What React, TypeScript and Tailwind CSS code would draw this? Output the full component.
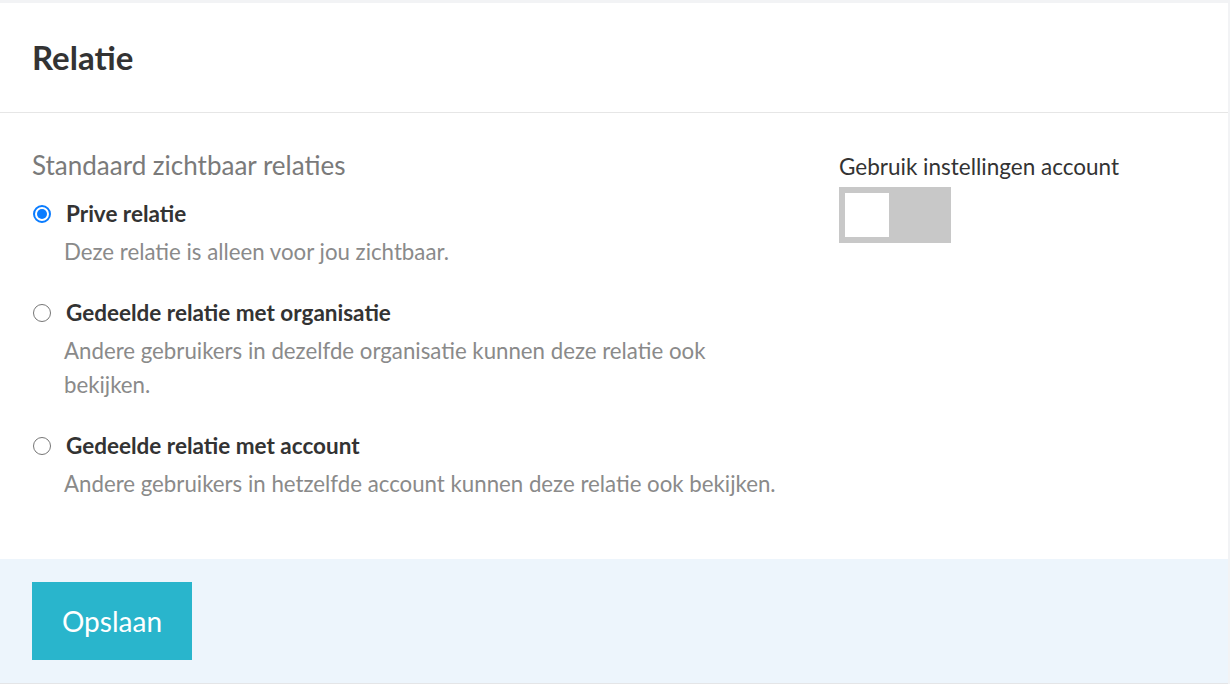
import React from "react";

function Radio({ checked }: { checked: boolean }) {
  return checked ? (
    <span className="flex h-[18px] w-[18px] shrink-0 items-center justify-center rounded-full border-2 border-[#0a7cff] bg-white">
      <span className="h-[10px] w-[10px] rounded-full bg-[#0a7cff]" />
    </span>
  ) : (
    <span className="h-[18px] w-[18px] shrink-0 rounded-full border border-[#767676] bg-white" />
  );
}

function Option({ checked, title, desc }: { checked: boolean; title: string; desc: string }) {
  return (
    <div className="flex flex-col">
      <div className="flex items-center gap-[15px] pl-[1px]">
        <Radio checked={checked} />
        <span className="text-[22.5px] font-bold leading-[28px] text-[#333]">{title}</span>
      </div>
      <p className="mt-[7px] pl-[32px] text-[22.25px] leading-[34px] text-[#8a8a8a]">{desc}</p>
    </div>
  );
}

export default function App() {
  return (
    <div className="h-[684px] w-[1230px] bg-[#f2f3f5] pt-[3px] font-['Lato','Liberation_Sans',sans-serif]">
      <div className="flex h-[681px] w-[1228px] flex-col border-b border-[#e4e5e7] bg-white">
        <div className="flex h-[110px] items-center border-b border-[#e6e6e6] px-[32px]">
          <h1 className="text-[33px] font-bold text-[#333]">Relatie</h1>
        </div>
        <div className="flex flex-1 px-[32px] pt-[36px]">
          <div className="w-[752px]">
            <div className="text-[26px] leading-[32px] text-[#7a7a7a]">Standaard zichtbaar relaties</div>
            <div className="mt-[19px] flex flex-col gap-[30px]">
              <Option checked title="Prive relatie" desc="Deze relatie is alleen voor jou zichtbaar." />
              <Option
                checked={false}
                title="Gedeelde relatie met organisatie"
                desc="Andere gebruikers in dezelfde organisatie kunnen deze relatie ook bekijken."
              />
              <Option
                checked={false}
                title="Gedeelde relatie met account"
                desc="Andere gebruikers in hetzelfde account kunnen deze relatie ook bekijken."
              />
            </div>
          </div>
          <div className="ml-[55px] pt-[4px]">
            <div className="text-[22.5px] leading-[28px] text-[#333]">Gebruik instellingen account</div>
            <div className="mt-[6px] flex h-[56px] w-[112px] items-center bg-[#c8c8c8] p-[6px]">
              <span className="h-[44px] w-[44px] bg-white" />
            </div>
          </div>
        </div>
        <div className="flex h-[124px] items-start bg-[#edf5fc] px-[32px] pt-[23px]">
          <button className="h-[78px] w-[160px] bg-[#29b5cc] text-[28px] text-white">Opslaan</button>
        </div>
      </div>
    </div>
  );
}
